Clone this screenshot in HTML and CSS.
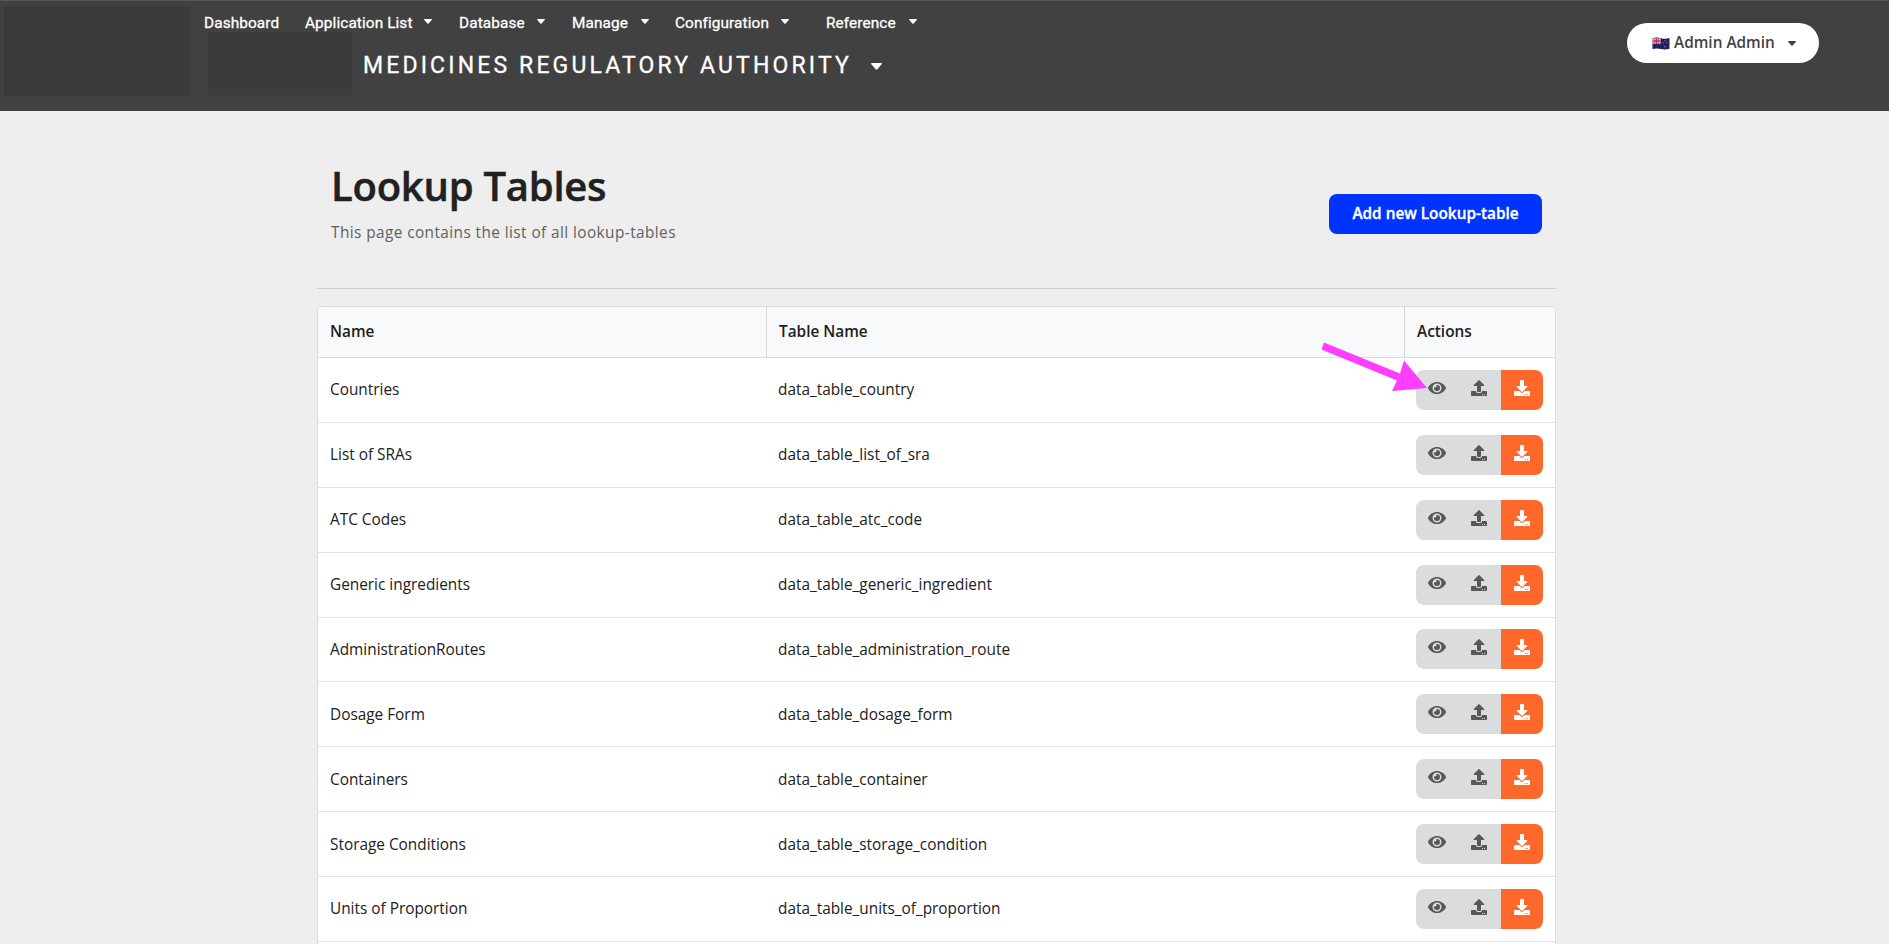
FILE: index.html
```html
<!DOCTYPE html>
<html lang="en">
<head>
<meta charset="utf-8">
<title>Lookup Tables</title>
<link rel="stylesheet" href="styles.css">
</head>
<body>
<svg class="sprite" aria-hidden="true">
  <symbol id="eye" viewBox="0 0 576 512"><path d="M572.52 241.4C518.29 135.59 410.93 64 288 64S57.68 135.64 3.48 241.41a32.35 32.35 0 0 0 0 29.19C57.71 376.41 165.07 448 288 448s230.32-71.64 284.52-177.41a32.35 32.35 0 0 0 0-29.19zM288 400a144 144 0 1 1 144-144 143.93 143.93 0 0 1-144 144zm0-240a95.31 95.31 0 0 0-25.31 3.79 47.85 47.85 0 0 1-66.9 66.9A95.78 95.78 0 1 0 288 160z"/></symbol>
  <symbol id="upload" viewBox="0 0 512 512"><path d="M296 384h-80c-13.3 0-24-10.7-24-24V192h-87.7c-17.8 0-26.7-21.5-14.1-34.1L242.3 5.7c7.5-7.5 19.8-7.5 27.3 0l152.2 152.2c12.6 12.6 3.7 34.1-14.1 34.1H320v168c0 13.3-10.7 24-24 24zm216-8v112c0 13.3-10.7 24-24 24H24c-13.3 0-24-10.7-24-24V376c0-13.3 10.7-24 24-24h136v8c0 30.9 25.1 56 56 56h80c30.9 0 56-25.1 56-56v-8h136c13.3 0 24 10.7 24 24zm-124 88c0-11-9-20-20-20s-20 9-20 20 9 20 20 20 20-9 20-20zm64 0c0-11-9-20-20-20s-20 9-20 20 9 20 20 20 20-9 20-20z"/></symbol>
  <symbol id="download" viewBox="0 0 512 512"><path d="M216 0h80c13.3 0 24 10.7 24 24v168h87.7c17.8 0 26.7 21.5 14.1 34.1L269.7 378.3c-7.5 7.5-19.8 7.5-27.3 0L90.1 226.1c-12.6-12.6-3.7-34.1 14.1-34.1H192V24c0-13.3 10.7-24 24-24zm296 376v112c0 13.3-10.7 24-24 24H24c-13.3 0-24-10.7-24-24V376c0-13.3 10.7-24 24-24h146.7l49 49c20.1 20.1 52.5 20.1 72.6 0l49-49H488c13.3 0 24 10.7 24 24zm-124 88c0-11-9-20-20-20s-20 9-20 20 9 20 20 20 20-9 20-20zm64 0c0-11-9-20-20-20s-20 9-20 20 9 20 20 20 20-9 20-20z"/></symbol>
  <symbol id="caret" viewBox="0 0 8 5"><path d="M.5 0h7q.8.2.2.9L4.6 4.5q-.6.6-1.2 0L.3.9Q-.3.2.5 0z"/></symbol>
</svg>
<header class="topbar">
  <div class="logo"></div>
  <div class="brand">
    <nav class="nav">
      <a class="nav-item dashboard">Dashboard</a>
      <a class="nav-item applications">Application List<svg class="caret"><use href="#caret"/></svg></a>
      <a class="nav-item database">Database<svg class="caret"><use href="#caret"/></svg></a>
      <a class="nav-item manage">Manage<svg class="caret"><use href="#caret"/></svg></a>
      <a class="nav-item configuration">Configuration<svg class="caret"><use href="#caret"/></svg></a>
      <a class="nav-item reference">Reference<svg class="caret"><use href="#caret"/></svg></a>
    </nav>
    <div class="org">
      <div class="org-logo"></div>
      <span class="org-name">MEDICINES REGULATORY AUTHORITY</span>
      <svg class="org-caret"><use href="#caret"/></svg>
    </div>
  </div>
  <button class="user">
    <svg class="flag" viewBox="0 0 18 13">
      <path fill="#1c2161" d="M.5 1.3Q4.500 0 9 1.200T17.500 1v10.800Q13 13 9 12T.5 12z"/>
      <path stroke="#e9dfe8" stroke-width="2" d="M.5 1.500l8 5M8.500 1.500l-8 5"/>
      <path stroke="#e9dfe8" stroke-width="2.600" d="M4.500 1v6M.5 4h8"/>
      <path stroke="#d9263c" stroke-width=".7" d="M.5 1.500l8 5M8.500 1.500l-8 5"/>
      <path stroke="#d9263c" stroke-width="1.400" d="M4.500 1v6M.5 4h8"/>
      <g fill="#b8406a"><circle cx="13" cy="3.500" r=".8"/><circle cx="11.300" cy="6" r=".8"/><circle cx="15" cy="5.500" r=".8"/><circle cx="13" cy="9.700" r=".9"/></g>
    </svg>
    <span class="user-name">Admin Admin</span>
    <svg class="caret"><use href="#caret"/></svg>
  </button>
</header>
<main class="page">
  <div class="page-head">
    <div>
      <h1>Lookup Tables</h1>
      <p>This page contains the list of all lookup-tables</p>
    </div>
    <button class="add">Add new Lookup-table</button>
  </div>
  <div class="table" id="table">
    <div class="row head"><div>Name</div><div>Table Name</div><div>Actions</div></div>
  </div>
  <svg class="pointer" viewBox="0 0 106 48"><path fill="#ff3dff" d="M4 2.500 80 33.500 84 20.500 107 48 72 51 77 40.500 1.500 9.500z"/></svg>
</main>
<template id="row">
  <div class="row">
    <div class="name"></div><div class="key"></div>
    <div class="actions">
      <div class="group">
        <button class="act"><svg class="eye"><use href="#eye"/></svg></button>
        <button class="act"><svg><use href="#upload"/></svg></button>
        <button class="act primary"><svg><use href="#download"/></svg></button>
      </div>
    </div>
  </div>
</template>
<script src="app.js"></script>
</body>
</html>
```
FILE: styles.css
```css
* { box-sizing: border-box; }
html { height: 100%; overflow: hidden; }
body {
  margin: 0;
  height: 944px;
  overflow: hidden;
  background: #eee;
  color: #212121;
  font-family: "Open Sans", sans-serif;
  font-size: 15.36px;
}
button { border: 0; padding: 0; margin: 0; font: inherit; }
.sprite { display: none; }
.topbar {
  height: 111px;
  padding-left: 4px;
  display: flex;
  align-items: flex-start;
  background: #414141;
  border-top: 1px solid #55565b;
  color: #fff;
  font-family: Roboto, sans-serif;
}
.logo { width: 186px; height: 90px; margin-top: 5px; background: #3b3b3b; }
.brand { margin-left: 18px; }
.nav {
  display: flex;
  height: 31px;
  padding: 11px 0 0;
  font-size: 15.36px;
  line-height: 22px;
  font-weight: 400;
  letter-spacing: .1px;
  -webkit-text-stroke: .3px #fff;
}
.nav-item { display: flex; justify-content: space-between; white-space: nowrap; }
.caret { width: 8px; height: 5px; fill: currentColor; margin-top: 7px; flex: none; }
.dashboard { width: 75px; margin-left: -4px; }
.applications { width: 127px; margin-left: 26px; }
.database { width: 86px; margin-left: 27px; }
.manage { width: 77px; margin-left: 27px; }
.configuration { width: 114px; margin-left: 26px; }
.reference { width: 91px; margin-left: 37px; }
.org { display: flex; }
.org-logo { width: 144px; height: 63px; background: #3b3b3b; }
.org-name {
  width: 501px;
  margin-left: 11px;
  padding-top: 20px;
  font-size: 23px;
  line-height: 28px;
  font-weight: 400;
  -webkit-text-stroke: .3px #fff;
  letter-spacing: 3.150px;
  white-space: nowrap;
}
.org-caret { width: 11px; height: 7px; fill: #fff; margin: 31px 0 0 7px; }
.user {
  width: 192px;
  height: 40px;
  margin: 22px 70px 0 auto;
  padding: 0 23px 0 25px;
  display: flex;
  align-items: center;
  border-radius: 20px;
  background: #fff;
  color: #424242;
  font-family: "Open Sans", sans-serif;
  font-size: 15.36px;
  font-weight: 600;
}
.flag { width: 18px; height: 13px; margin-right: 4px; fill: none; }
.user-name { padding-bottom: 2px; white-space: nowrap; }
.user .caret { margin: 1px 0 0 auto; }
.page { width: 1239px; margin-left: 317px; position: relative; }
.page-head {
  height: 178px;
  padding: 47px 14px 0;
  display: flex;
  justify-content: space-between;
  border-bottom: 1px solid #ccc;
}
h1 { margin: 0; font-size: 40px; letter-spacing: -.25px; line-height: 56px; font-weight: 600; -webkit-text-stroke: .5px #212121; white-space: nowrap; }
p { margin: 8px 0 0; line-height: 22px; font-size: 15.36px; letter-spacing: .420px; color: #616161; }
.add {
  width: 213px;
  height: 40px;
  margin-top: 36px;
  padding-bottom: 2px;
  border-radius: 8px;
  background: #03f;
  color: #fff;
  font-weight: 600;
  white-space: nowrap;
  -webkit-text-stroke: .3px #fff;
}
.table {
  height: 638px;
  margin-top: 17px;
  border: 1px solid #dcdde0;
  border-bottom: 0;
  border-radius: 5px 5px 0 0;
  background: #fff;
  overflow: hidden;
}
.row {
  display: grid;
  grid-template-columns: 448px 638px 151px;
  height: 64.875px;
  border-bottom: 1px solid #e2e3e5;
}
.row > div { display: flex; align-items: center; padding-left: 12px; white-space: nowrap; }
.row.head { height: 51px; background: #f8f9fb; border-color: #dcdde0; font-weight: 600; }
.row.head > div { padding-bottom: 1px; }
.row.head > div + div { border-left: 1px solid #d4d6d9; }
.group { display: flex; width: 127px; height: 40px; border-radius: 8px; overflow: hidden; }
.act {
  flex: 1;
  display: flex;
  justify-content: center;
  align-items: center;
  padding-bottom: 4px;
  background: #dadcde;
}
.act svg { width: 16px; height: 16px; fill: #57585a; }
.act .eye { width: 18px; }
.act.primary { background: #ff682b; }
.act.primary svg { fill: #fff; }
.pointer { position: absolute; left: 1003px; top: 229px; width: 106px; height: 48px; overflow: visible; }
```
FILE: app.js
```js
const tables = [
  ["Countries", "data_table_country"],
  ["List of SRAs", "data_table_list_of_sra"],
  ["ATC Codes", "data_table_atc_code"],
  ["Generic ingredients", "data_table_generic_ingredient"],
  ["AdministrationRoutes", "data_table_administration_route"],
  ["Dosage Form", "data_table_dosage_form"],
  ["Containers", "data_table_container"],
  ["Storage Conditions", "data_table_storage_condition"],
  ["Units of Proportion", "data_table_units_of_proportion"]
];
const template = document.getElementById("row");
for (const [name, key] of tables) {
  const row = template.content.cloneNode(true);
  row.querySelector(".name").textContent = name;
  row.querySelector(".key").textContent = key;
  document.getElementById("table").append(row);
}
```
